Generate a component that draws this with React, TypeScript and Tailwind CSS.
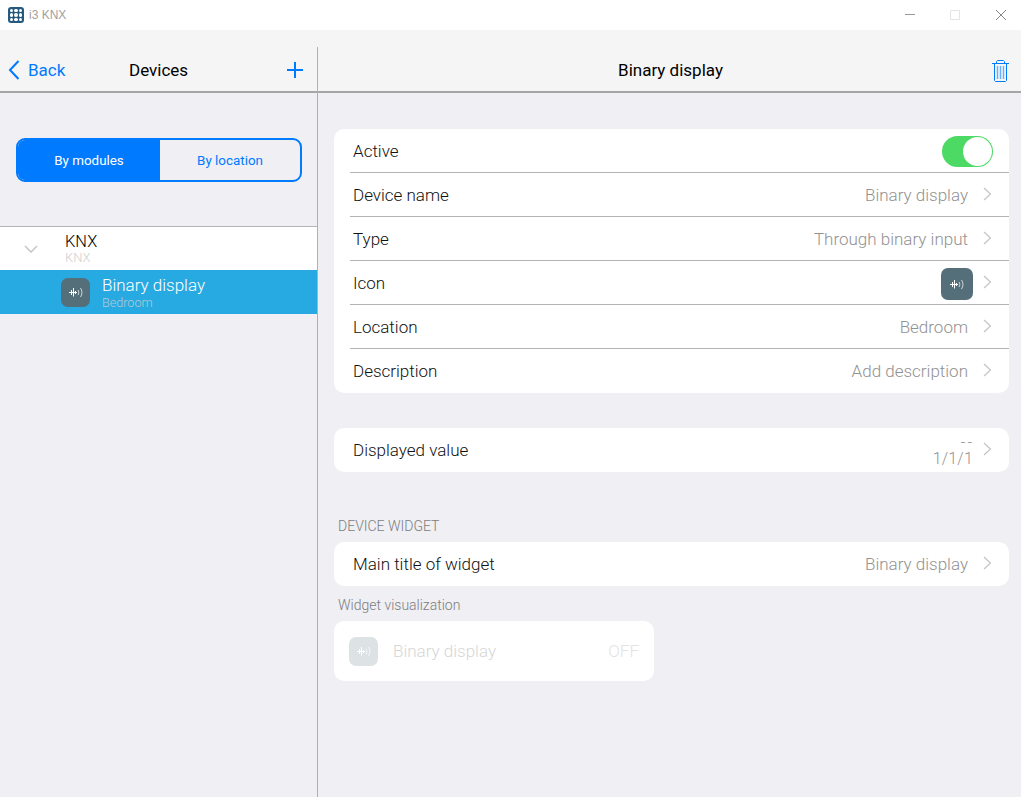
const SignalIcon = ({ className }: { className: string }) => (
    <svg viewBox="0 0 14 10" className={className} fill="none" stroke="currentColor">
        <path d="M0 5.5H8" strokeWidth="1" />
        <path d="M2.5 3V8M4.5 1V9.5M6.5 4V7" strokeWidth="1" />
        <path d="M9 3C10 4.4 10 6.6 9 8" strokeWidth="0.9" opacity="0.8" />
        <path d="M11.5 1C13.4 3.4 13.4 7.6 11.5 10" strokeWidth="0.9" opacity="0.8" />
    </svg>
);

const Chevron = () => (
    <svg viewBox="0 0 9 14" className="w-[9px] h-[14px] ml-[15px] mr-[17px] -mt-[3px] shrink-0" fill="none" stroke="#c4c4c8" strokeWidth="1.2">
        <path d="M1 1l6.5 6L1 13" />
    </svg>
);

const Row = ({ label, value, divider = true }: { label: string; value?: string; divider?: boolean }) => (
    <div className="flex h-11 items-center pl-4">
        <div className={`flex flex-1 h-full items-center ${divider ? 'border-b border-[#b4b4b4] pt-[2px]' : ''}`}>
            <span className="flex-1 pl-[3px] text-[17px] text-[#111] pt-[1px]">{label}</span>
            {value && <span className="text-[17px] text-[#929292] pt-[1px]">{value}</span>}
            <Chevron />
        </div>
    </div>
);

export default function App() {
    return (
        <div className="h-[797px] w-[1021px] overflow-hidden flex flex-col bg-[#efeff4] font-['Roboto','Liberation_Sans',sans-serif] font-light">
            {/* window title bar */}
            <div className="h-[30px] bg-white flex items-center shrink-0">
                <div className="ml-2 w-4 h-4 rounded-[3px] bg-[#25597f] grid grid-cols-3 gap-[1px] p-[2px]">
                    {[0, 1, 2, 3, 4, 5, 6, 7, 8].map((i) => (
                        <span key={i} className="bg-white rounded-full" />
                    ))}
                </div>
                <span className="ml-[5px] text-[12px] text-[#a0a0a0] font-['Liberation_Sans',sans-serif] font-normal">i3 KNX</span>
                <div className="ml-auto flex items-center">
                    <svg viewBox="0 0 10 10" className="w-[10px] h-[10px] mr-[35px]" fill="none" stroke="#999" strokeWidth="1">
                        <path d="M0 4.5h10" />
                    </svg>
                    <svg viewBox="0 0 10 10" className="w-[10px] h-[10px] mr-[36px]" fill="none" stroke="#e4e4e4" strokeWidth="1">
                        <path d="M.5.5h9v9h-9z" />
                    </svg>
                    <svg viewBox="0 0 10 10" className="w-[10px] h-[10px] mr-[15px]" fill="none" stroke="#888" strokeWidth="1">
                        <path d="M0 0l10 10M10 0L0 10" />
                    </svg>
                </div>
            </div>

            {/* nav bar */}
            <div className="h-[63px] shrink-0 flex bg-[#f5f5f5] border-b-2 border-[#a5a5a5]">
                <div className="w-[318px] shrink-0 mt-[17px] border-r border-[#b0b0b0] flex items-center relative -mb-[2px]">
                    <div className="flex items-center text-[#007aff]">
                        <svg viewBox="0 0 12 20" className="ml-[8px] mr-[8px] w-[12px] h-[20px]" fill="none" stroke="currentColor" strokeWidth="2">
                            <path d="M10.5 1L2 10l8.5 9" />
                        </svg>
                        <span className="text-[17px] font-normal pt-[2px]">Back</span>
                    </div>
                    <span className="absolute left-[129px] top-[11px] text-[17px] text-black font-normal">Devices</span>
                    <svg viewBox="0 0 16 16" className="ml-auto mr-[14px] w-[16px] h-[16px]" fill="none" stroke="#007aff" strokeWidth="2">
                        <path d="M8 0v16M0 8h16" />
                    </svg>
                </div>
                <div className="flex-1 flex items-center justify-center relative pt-[21px] pl-[2px]">
                    <span className="text-[17px] text-black font-normal">Binary display</span>
                    <svg viewBox="0 0 17 22" className="absolute right-[12px] top-[30px] w-[17px] h-[22px]" fill="none" stroke="#007aff" strokeWidth="1">
                        <path d="M0 3.5h17M4.5 3.5V1.5l1-1h6l1 1v2M2.5 3.5v17l1 1h10l1-1v-17" />
                        <path d="M5.5 6v13M8.5 6v13M11.5 6v13" strokeWidth="1.4" stroke="#66aeff" />
                    </svg>
                </div>
            </div>

            <div className="flex flex-1 min-h-0">
                {/* left column */}
                <div className="w-[318px] shrink-0 border-r border-[#b0b0b0]">
                    <div className="ml-4 mr-[15px] mt-[45px] h-[44px] flex rounded-[9px] border-2 border-[#007aff] overflow-hidden text-[13.4px]">
                        <div className="w-[142px] bg-[#007aff] text-white flex items-center justify-center font-normal pt-[2px]">By modules</div>
                        <div className="flex-1 text-[#007aff] flex items-center justify-center font-normal pt-[2px]">By location</div>
                    </div>
                    <div className="mt-[44px] border-t border-[#b4b4b4] bg-white h-[44px] flex">
                        <svg viewBox="0 0 14 8" className="w-[14px] h-[8px] ml-[24px] mt-[18px]" fill="none" stroke="#c8c8c8" strokeWidth="1.6">
                            <path d="M1 1l6 6 6-6" />
                        </svg>
                        <div className="ml-[27px] mt-[5px] flex flex-col">
                            <span className="text-[16.4px] leading-[19px] text-black">KNX</span>
                            <span className="text-[13px] leading-[13px] text-[#cfcfcf]">KNX</span>
                        </div>
                    </div>
                    <div className="h-[44px] bg-[#27aae1] flex items-center">
                        <div className="ml-[61px] w-[29px] h-[29px] rounded-[7px] bg-[#546e7a] flex items-center justify-center">
                            <SignalIcon className="w-[14px] h-[10px] text-white" />
                        </div>
                        <div className="ml-3 flex flex-col">
                            <span className="text-[17px] leading-[20px] text-white -mt-[1px] mb-[1px]">Binary display</span>
                            <span className="text-[12.6px] leading-[13px] text-[#b5c9d4]">Bedroom</span>
                        </div>
                    </div>
                </div>

                {/* right column */}
                <div className="flex-1 pl-4 pr-3 pt-[36px]">
                    <div className="bg-white rounded-[10px]">
                        <div className="flex h-11 items-center pl-4">
                            <div className="flex flex-1 h-full items-center border-b border-[#b4b4b4] pt-[2px]">
                                <span className="flex-1 pl-[3px] text-[17px] text-[#111] pt-[1px]">Active</span>
                                <div className="w-[51px] h-[31px] mr-[16px] rounded-full bg-[#4cd964] relative">
                                    <div className="absolute right-[1px] top-[1px] w-[29px] h-[29px] rounded-full bg-white" />
                                </div>
                            </div>
                        </div>
                        <Row label="Device name" value="Binary display" />
                        <Row label="Type" value="Through binary input" />
                        <div className="flex h-11 items-center pl-4">
                            <div className="flex flex-1 h-full items-center border-b border-[#b4b4b4] pt-[2px]">
                                <span className="flex-1 pl-[3px] text-[17px] text-[#111] pt-[1px]">Icon</span>
                                <div className="w-8 h-8 -mr-[5px] rounded-[7px] bg-[#546e7a] flex items-center justify-center">
                                    <SignalIcon className="w-[14px] h-[10px] text-white" />
                                </div>
                                <Chevron />
                            </div>
                        </div>
                        <Row label="Location" value="Bedroom" />
                        <Row label="Description" value="Add description" divider={false} />
                    </div>

                    <div className="bg-white rounded-[10px] mt-[35px]">
                        <div className="flex h-11 items-center pl-[19px]">
                            <span className="flex-1 text-[17px] text-[#111] pt-[1px]">Displayed value</span>
                            <div className="flex flex-col items-end text-[#929292] text-[16px] leading-[16px] -mr-[5px] mt-[2px]">
                                <span className="tracking-[2px] -mr-[1px]">--</span>
                                <span className="tracking-[0.2px]">1/1/1</span>
                            </div>
                            <Chevron />
                        </div>
                    </div>

                    <div className="mt-[46px] mb-[8px] pl-1 text-[14px] leading-[16px] text-[#7d7d7d]">DEVICE WIDGET</div>
                    <div className="bg-white rounded-[10px]">
                        <Row label="Main title of widget" value="Binary display" divider={false} />
                    </div>
                    <div className="mt-[11px] mb-[8px] pl-1 text-[14px] leading-[16px] text-[#7d7d7d]">Widget visualization</div>
                    <div className="w-[320px] h-[60px] bg-white rounded-[10px] flex items-center px-[15px]">
                        <div className="w-[29px] h-[29px] rounded-[7px] bg-[#dde3e5] flex items-center justify-center">
                            <SignalIcon className="w-[14px] h-[10px] text-white" />
                        </div>
                        <span className="ml-[15px] flex-1 text-[17px] text-[#d6d6d6] pt-[1px]">Binary display</span>
                        <span className="text-[17px] text-[#e2e2e2] pt-[1px]">OFF</span>
                    </div>
                </div>
            </div>
        </div>
    );
}
